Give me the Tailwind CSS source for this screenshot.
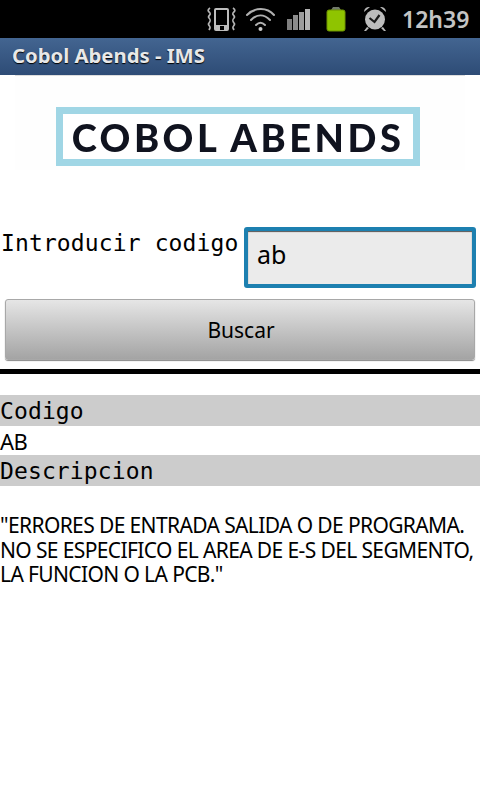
<!DOCTYPE html>
<html>
<head>
<meta charset="utf-8">
<script src="https://cdn.jsdelivr.net/npm/@tailwindcss/browser@4"></script>
</head>
<body class="bg-white font-['Noto_Sans',sans-serif] text-black">
<div class="w-[480px] h-[800px] overflow-hidden flex flex-col bg-white">
  <div class="h-[38px] bg-black flex items-center shrink-0 pl-[206px]">
    <svg class="w-[182px] h-[38px] shrink-0" viewBox="0 0 182 38">
      <g fill="none" stroke="#b4b4b4" stroke-width="1.700">
        <path d="M4 8c-3 2-2 3 0 5 1.500 2-3 3-1 5 2 2 1.500 3 0 5-2 2 2 3 1 5l-1 2"/>
        <path d="M27 8c3 2 2 3 0 5-1.500 2 3 3 1 5-2 2-1.500 3 0 5 2 2-2 3-1 5l1 2"/>
      </g>
      <path fill-rule="evenodd" fill="#bdbdbd" d="M10 8h11a2 2 0 0 1 2 2v19a2 2 0 0 1-2 2H10a2 2 0 0 1-2-2V10a2 2 0 0 1 2-2zm0 2v15h11V10zm4 16v4h4v-4z"/>
      <g fill="none" stroke="#b0b0b0" stroke-linecap="round">
        <path stroke-width="2" d="M41 15c8-8 20-8 27 0"/>
        <path stroke-width="2" d="M45 20c6-6 13-6 19 0"/>
        <path stroke-width="2" d="M50 25c3-3 6-3 9 0"/>
      </g>
      <circle cx="54.500" cy="29" r="2" fill="#cccccc"/>
      <rect x="81" y="19" width="5" height="11" fill="#808080"/>
      <rect x="87" y="15" width="5" height="15" fill="#8c8c8c"/>
      <rect x="93" y="12" width="5" height="18" fill="#9c9c9c"/>
      <rect x="99" y="9" width="5" height="21" fill="#b4b4b4"/>
      <path d="M125 10l2-3h6l2 3z" fill="#70786a"/>
      <rect x="121" y="10" width="18" height="21" rx="2" fill="#8fc400" stroke="#6e9400"/>
      <g fill="#b8b8b8">
        <path d="M158 12a5 5 0 0 1 6-5z"/>
        <path d="M180 12a5 5 0 0 0-6-5z"/>
        <path d="M161 27l-3 4h2l3-3zM177 27l3 4h-2l-3-3z"/>
      </g>
      <circle cx="169" cy="19.500" r="10" fill="#bdbdbd"/>
      <path d="M163.500 18l5 4 5-7" fill="none" stroke="#1a1a1a" stroke-width="2.200"/>
    </svg>
    <span class="ml-[14px] font-semibold text-[23px] text-[#c4c4c4] leading-none">12h39</span>
  </div>
  <div class="h-[37px] shrink-0 bg-gradient-to-b from-[#436591] to-[#2e4c76] flex items-center px-3 pb-[3px]">
    <span class="font-bold text-[20.300px] text-[#e8e8e8] leading-none [text-shadow:0_1px_1px_#000]">Cobol Abends - IMS</span>
  </div>
  <div class="h-[95px] mx-[15px] border-t border-[#dddddd] shrink-0 flex items-start justify-start pl-[41px] pt-[31px] bg-[#fefefe]">
    <div class="w-[364px] h-[59px] border-[7px] border-[#a0d6e5] bg-white flex items-center justify-center">
      <span class="font-['Lato',sans-serif] font-black text-[38px] tracking-[3.500px] text-[#10131f] leading-none blur-[0.6px] whitespace-nowrap">COBOL ABENDS</span>
    </div>
  </div>
  <div class="h-[57px] shrink-0"></div>
  <div class="flex items-start shrink-0 h-[60px]">
    <span class="font-['DejaVu_Sans_Mono',monospace] text-[23px] tracking-[0.12px] leading-none pl-px pt-[5px] whitespace-nowrap w-[244px]">Introducir codigo</span>
    <div class="w-[232px] h-[61px] border-[4px] border-[#1d80b0] rounded-[3px] bg-[#ebebeb] flex items-center pl-[9px] pb-[7px] text-[25px] leading-none shadow-[inset_0_1px_1px_#555]">ab</div>
  </div>
  <div class="mt-[12px] mx-[5px] h-[61px] shrink-0 border border-[#a8a8a8] rounded-[3px] bg-gradient-to-b from-[#e6e6e6] to-[#a4a4a4] flex items-center justify-center pl-[2px] pt-px text-[21px] leading-none shadow-[0_1px_1px_#888]">Buscar</div>
  <div class="h-[5px] bg-black mt-[9px] shrink-0"></div>
  <div class="h-[31px] mt-[21px] bg-[#cccccc] flex items-center pt-px font-['DejaVu_Sans_Mono',monospace] text-[23px] tracking-[0.12px] leading-none shrink-0">Codigo</div>
  <div class="h-[29px] flex items-center text-[22px] tracking-[-0.5px] leading-none shrink-0">AB</div>
  <div class="h-[31px] bg-[#cccccc] flex items-center pt-px font-['DejaVu_Sans_Mono',monospace] text-[23px] tracking-[0.12px] leading-none shrink-0">Descripcion</div>
  <p class="mt-[27px] text-[21px] leading-[24.500px] tracking-[-0.62px] whitespace-nowrap">"ERRORES DE ENTRADA SALIDA O DE PROGRAMA.<br>NO SE ESPECIFICO EL AREA DE E-S DEL SEGMENTO,<br>LA FUNCION O LA PCB."</p>
</div>
</body>
</html>
